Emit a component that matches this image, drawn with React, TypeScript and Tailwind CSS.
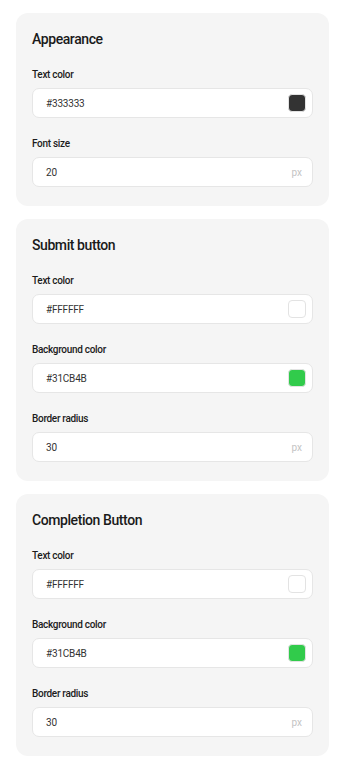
const sections = [
  {
    title: "Appearance",
    fields: [
      { label: "Text color", value: "#333333", swatch: "#333333" },
      { label: "Font size", value: "20", unit: "px" },
    ],
  },
  {
    title: "Submit button",
    fields: [
      { label: "Text color", value: "#FFFFFF", swatch: "#FFFFFF" },
      { label: "Background color", value: "#31CB4B", swatch: "#31CB4B" },
      { label: "Border radius", value: "30", unit: "px" },
    ],
  },
  {
    title: "Completion Button",
    fields: [
      { label: "Text color", value: "#FFFFFF", swatch: "#FFFFFF" },
      { label: "Background color", value: "#31CB4B", swatch: "#31CB4B" },
      { label: "Border radius", value: "30", unit: "px" },
    ],
  },
];

type Field = { label: string; value: string; swatch?: string; unit?: string };

const FieldRow = ({ field }: { field: Field }) => (
  <div>
    <label className="block text-[10px] font-medium leading-[14px] text-[#1c1c1c] tracking-[-0.03em]">
      {field.label}
    </label>
    <div className="mt-[6px] h-[30px] flex items-center justify-between bg-white border border-[#e6e6e6] rounded-[7px] pl-[13px] pr-[6px]">
      <span className="text-[10px] text-[#333333] tracking-[-0.02em]">{field.value}</span>
      {field.swatch ? (
        <span
          className="w-[18px] h-[18px] rounded-[4px] border border-[#e3e3e3]"
          style={{ backgroundColor: field.swatch }}
        />
      ) : (
        <span className="text-[10px] text-[#c4c4c4] pr-[4px]">{field.unit}</span>
      )}
    </div>
  </div>
);

export default function App() {
  return (
    <div
      className="bg-white pl-4 pr-3 pt-[13px] pb-3 flex flex-col gap-[13px]"
      style={{ fontFamily: "Roboto, 'Liberation Sans', sans-serif" }}
    >
      {sections.map((section) => (
        <section key={section.title} className="bg-[#f5f5f5] rounded-[12px] px-4 pt-4 pb-[19px]">
          <h3 className="text-[14px] leading-5 font-medium text-[#1a1a1a] tracking-[-0.03em]">
            {section.title}
          </h3>
          <div className="mt-[19px] flex flex-col gap-[19px]">
            {section.fields.map((field, i) => (
              <FieldRow key={i} field={field} />
            ))}
          </div>
        </section>
      ))}
    </div>
  );
}
